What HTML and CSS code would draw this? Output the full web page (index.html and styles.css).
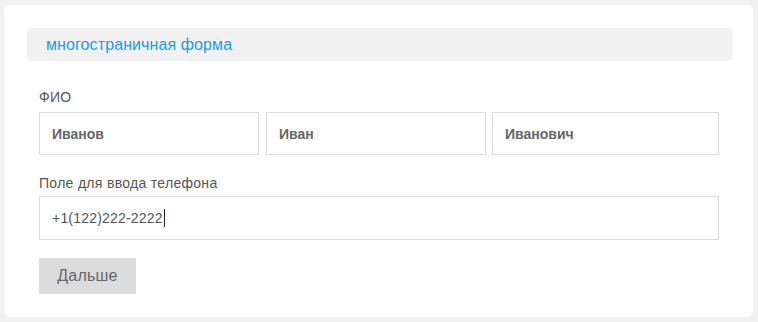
FILE: index.html
```html
<!DOCTYPE html>
<html lang="ru">
<head>
    <meta charset="UTF-8">
    <meta name="viewport" content="width=device-width, initial-scale=1.0">
    <title>Многостраничная форма</title>

    <link rel="stylesheet" href="styles.css">
</head>
<body>

<main class="card">
    <div class="card-header">многостраничная форма</div>

    <form class="step">
        <label class="label">ФИО</label>
        <div class="row">
            <div class="field field-bold">Иванов</div>
            <div class="field field-bold">Иван</div>
            <div class="field field-bold">Иванович</div>
        </div>

        <label class="label label-phone">Поле для ввода телефона</label>
        <div class="field field-phone">+1(122)222-2222<span class="caret"></span></div>

        <button type="button" class="btn-next">Дальше</button>
    </form>
</main>

</body>
</html>
```

FILE: styles.css
```css
body{
    margin: 0;
    padding: 5px 5px 5px 4px;
    background-color: #f1f1f1;
    font-family: "Liberation Sans", Arial, sans-serif;
    color: #555;
}

.card{
    background-color: #fff;
    border-radius: 6px;
    height: 312px;
    box-sizing: border-box;
    padding: 23px 21px 0 23px;
}

.card-header{
    background-color: #f1f1f1;
    border-radius: 4px;
    height: 33px;
    line-height: 33px;
    padding-left: 19px;
    font-size: 16px;
    letter-spacing: 0.1px;
    color: #1d9de3;
}

.step{
    margin-top: 28px;
    padding: 0 13px 0 12px;
    display: flex;
    flex-direction: column;
    align-items: flex-start;
}

.label{
    font-size: 14px;
    line-height: 16px;
    letter-spacing: 0.3px;
    color: #555;
    margin-bottom: 7px;
}

.label-phone{
    margin-top: 20px;
    margin-bottom: 5px;
}

.row{
    display: grid;
    grid-template-columns: 220px 220px 1fr;
    column-gap: 7px;
    width: 100%;
}

.field{
    box-sizing: border-box;
    height: 43px;
    border: 1px solid #dcdcdc;
    padding: 0 12px;
    display: flex;
    align-items: center;
    font-size: 14px;
    color: #555;
}

.field-bold{
    font-weight: bold;
    color: #666;
}

.row .field:last-child{
    margin-left: -1px;
}

.field-phone{
    width: 100%;
    height: 44px;
    letter-spacing: 0.2px;
}

.caret{
    display: inline-block;
    width: 1px;
    height: 18px;
    background-color: #222;
    margin-left: 1px;
}

.btn-next{
    margin-top: 18px;
    width: 97px;
    height: 36px;
    border: none;
    border-radius: 0;
    background-color: #dcdcdc;
    color: #666;
    font-family: "Liberation Sans", Arial, sans-serif;
    font-size: 16px;
    letter-spacing: 0.2px;
    padding: 0;
    cursor: pointer;
}
```
